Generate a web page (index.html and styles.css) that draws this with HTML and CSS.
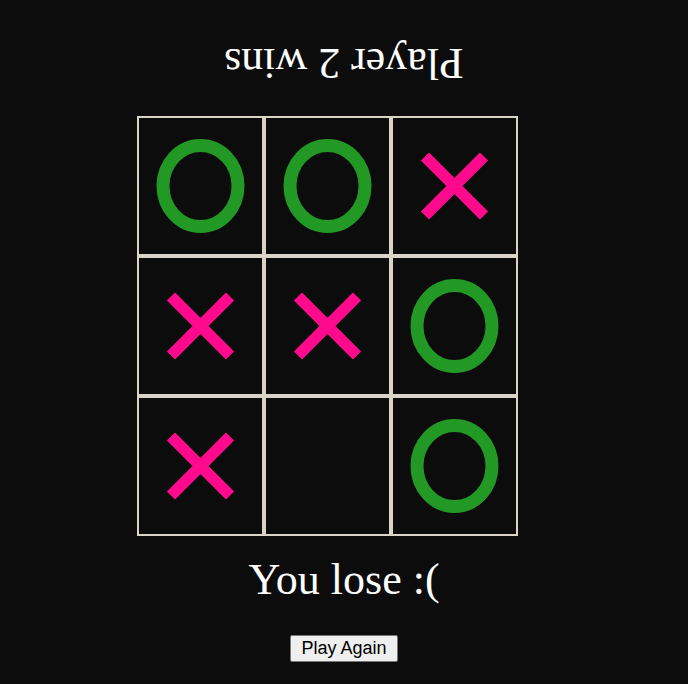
FILE: index.html
```html
<!DOCTYPE html>
<html>
<head>
<meta charset="utf-8">
<link rel="stylesheet" href="styles.css">
</head>
<body>
<main class="game">
  <h2 class="status flipped">Player 2 wins</h2>
  <div class="board">
    <div class="cell"><svg viewBox="0 0 123 136"><ellipse class="o" cx="61.5" cy="68" rx="37.5" ry="40.5"/></svg></div>
    <div class="cell"><svg viewBox="0 0 123 136"><ellipse class="o" cx="61.5" cy="68" rx="37.5" ry="40.5"/></svg></div>
    <div class="cell"><svg viewBox="0 0 123 136"><path class="x" d="M32 38.5 L91 97.5 M91 38.5 L32 97.5"/></svg></div>
    <div class="cell"><svg viewBox="0 0 123 136"><path class="x" d="M32 38.5 L91 97.5 M91 38.5 L32 97.5"/></svg></div>
    <div class="cell"><svg viewBox="0 0 123 136"><path class="x" d="M32 38.5 L91 97.5 M91 38.5 L32 97.5"/></svg></div>
    <div class="cell"><svg viewBox="0 0 123 136"><ellipse class="o" cx="61.5" cy="68" rx="37.5" ry="40.5"/></svg></div>
    <div class="cell"><svg viewBox="0 0 123 136"><path class="x" d="M32 38.5 L91 97.5 M91 38.5 L32 97.5"/></svg></div>
    <div class="cell"></div>
    <div class="cell"><svg viewBox="0 0 123 136"><ellipse class="o" cx="61.5" cy="68" rx="37.5" ry="40.5"/></svg></div>
  </div>
  <h2 class="status result">You lose :(</h2>
  <button class="again">Play Again</button>
</main>
</body>
</html>
```
FILE: styles.css
```css
html, body {
  margin: 0;
  padding: 0;
  background: #0c0c0c;
}
.game {
  display: flex;
  flex-direction: column;
  align-items: center;
  width: 688px;
  height: 684px;
  font-family: "Liberation Serif", "Times New Roman", serif;
  color: #ffffff;
}
.status {
  margin: 0;
  font-weight: normal;
  font-size: 44px;
  line-height: 50px;
  height: 50px;
}
.flipped {
  transform: rotate(180deg);
  margin-top: 38px;
}
.board {
  display: grid;
  grid-template-columns: repeat(3, 127px);
  grid-template-rows: repeat(3, 140px);
  margin-top: 28px;
  margin-right: 34px;
}
.cell {
  border: 2px solid #d8d4c7;
  width: 123px;
  height: 136px;
}
.cell svg {
  display: block;
  width: 123px;
  height: 136px;
}
.o {
  fill: none;
  stroke: #229924;
  stroke-width: 13;
}
.x {
  stroke: #ff0a8c;
  stroke-width: 11.5;
  fill: none;
}
.result {
  margin-top: 19px;
}
.again {
  margin-top: 30px;
  box-sizing: border-box;
  height: 27px;
  font-family: "Liberation Sans", Arial, sans-serif;
  font-size: 18px;
  padding: 0 10px;
  color: #000;
  background: #efefef;
  border: 1px solid #767676;
  border-radius: 2px;
}
```
